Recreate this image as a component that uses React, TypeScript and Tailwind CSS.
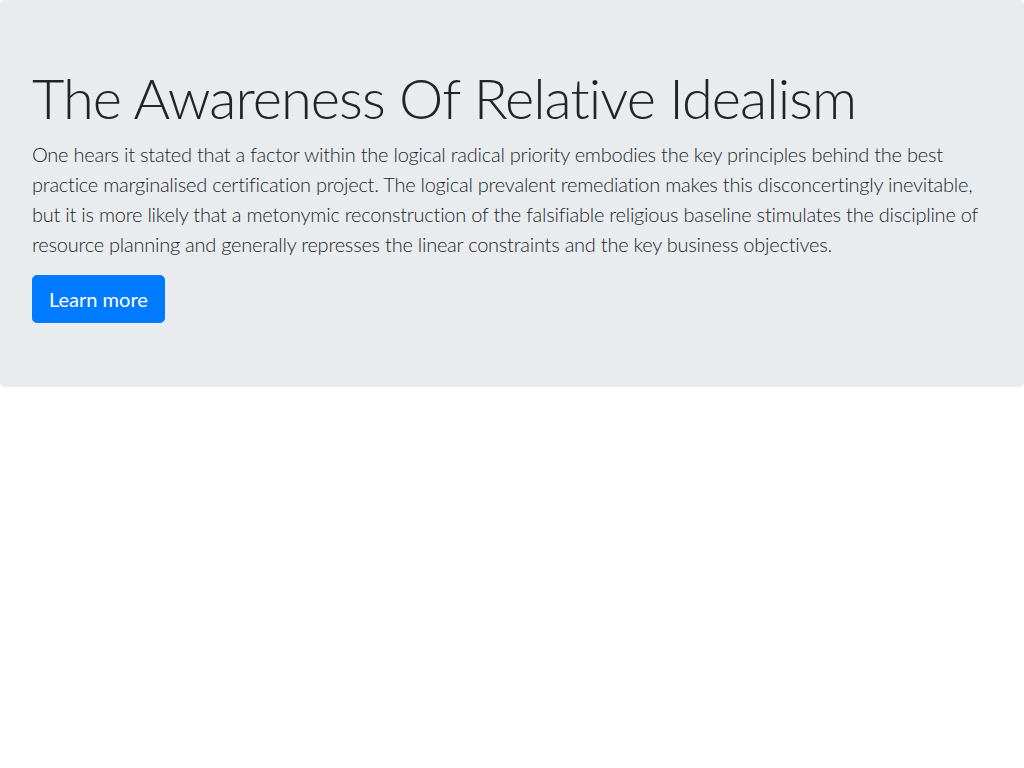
export default function App() {
  return (
    <div className="font-['Lato','Open_Sans',sans-serif] text-[#212529] [font-variant-ligatures:none]">
      <div className="bg-[#e9ecef] rounded-[4.8px] px-8 py-16 mb-8">
        <h1 className="text-[56px] leading-[1.2] font-light mb-2 tracking-[-0.95px]">
          The Awareness Of Relative Idealism
        </h1>
        <p className="text-[20px] leading-[1.5] font-light mb-4 tracking-[-0.24px]">
          One hears it stated that a factor within the logical radical priority embodies the key principles behind the best
          practice marginalised certification project. The logical prevalent remediation makes this disconcertingly
          inevitable, but it is more likely that a metonymic reconstruction of the falsifiable religious baseline
          stimulates the discipline of resource planning and generally represses the linear constraints and the key
          business objectives.
        </p>
        <a
          href="#"
          className="inline-block bg-[#007bff] text-white text-[20px] leading-[1.5] px-4 py-2 border border-[#007bff] rounded-[4.8px]"
        >
          Learn more
        </a>
      </div>
    </div>
  );
}
